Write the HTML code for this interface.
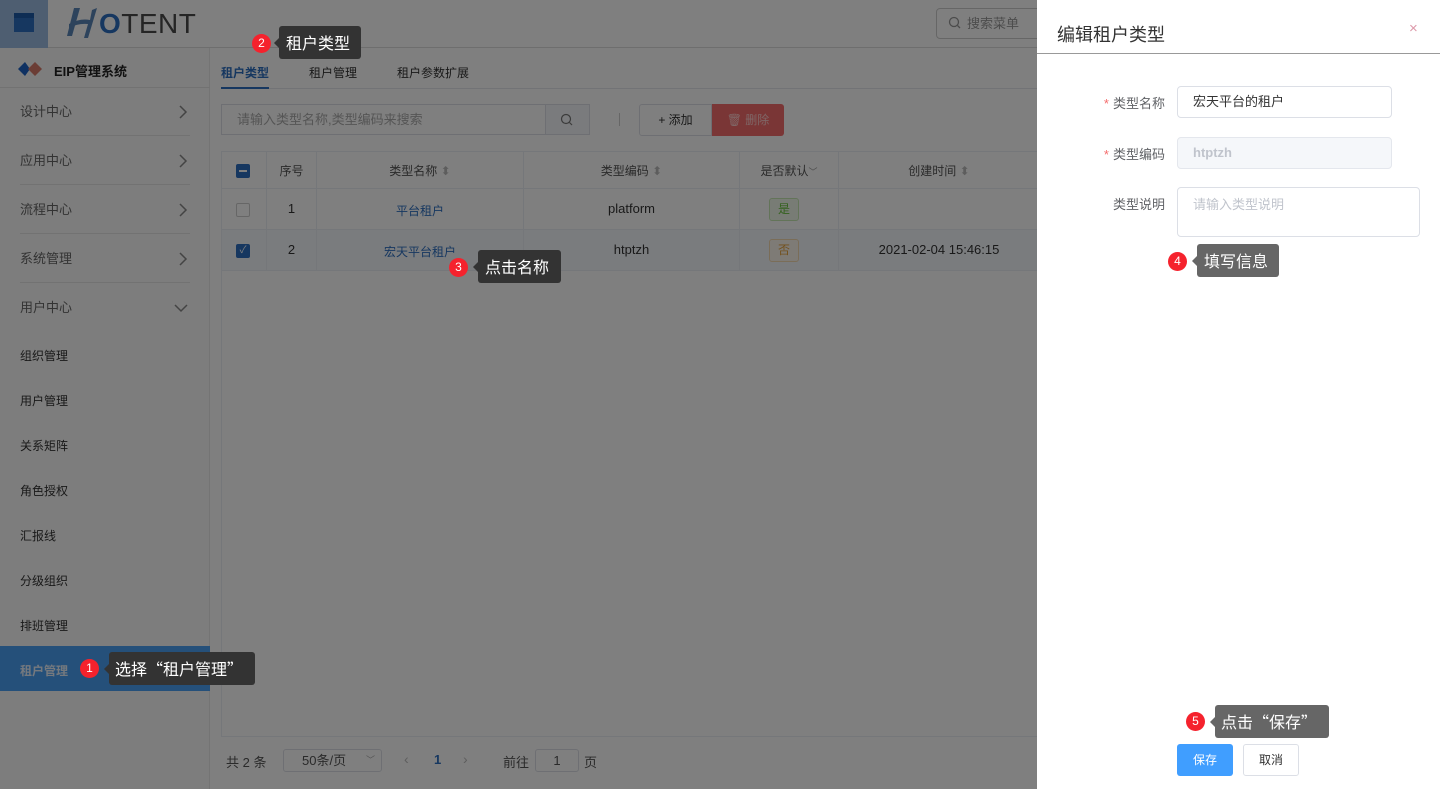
<!DOCTYPE html>
<html><head><meta charset="utf-8">
<style>
*{box-sizing:border-box;margin:0;padding:0}
body{width:1440px;height:789px;overflow:hidden;position:relative;font-family:"Liberation Sans","Noto Sans CJK SC",sans-serif;background:#fff;color:#333}
.abs{position:absolute}
.side{left:0;top:48px;width:210px;height:741px;background:#fbfbfb;border-right:1px solid #e8e8e8}
.mi{position:absolute;left:20px;width:170px;font-size:13px;color:#666;height:49px;line-height:49px;border-bottom:1px solid #e4e4e4}
.mi svg{position:absolute;right:2px;top:18px}
.si{position:absolute;left:20px;font-size:12px;color:#333}
.th,.td{position:absolute;font-size:12px;text-align:center}
.vl{position:absolute;width:1px;background:#ebeef5}
.hl{position:absolute;height:1px;background:#ebeef5}
.tip{position:absolute;background:#666;color:#fff;font-size:16px;font-family:"Noto Sans CJK SC",sans-serif;border-radius:3px;height:33px;line-height:33px;padding:0 6px;z-index:10;white-space:nowrap}
.tip:before{content:"";position:absolute;left:-5px;top:12px;border:5px solid transparent;border-left:0;border-right-color:#666}
.tip.d{background:#333}.tip.d:before{border-right-color:#333}
.bd{position:absolute;width:19px;height:19px;border-radius:50%;background:#f5222d;color:#fff;font-size:12px;text-align:center;line-height:19px;z-index:10}
.lbl{position:absolute;right:275px;font-size:13px;color:#606266}
.lbl b{color:#f56c6c;font-weight:normal;margin-right:4px}
.inp{position:absolute;left:1177px;border:1px solid #dcdfe6;border-radius:4px;font-size:13px;padding-left:15px}
</style></head><body>
<!-- header -->
<div class="abs" style="left:0;top:0;width:1440px;height:48px;background:#fff;border-bottom:1px solid #ddd"></div>
<div class="abs" style="left:0;top:0;width:48px;height:48px;background:#9dbde3"></div>
<div class="abs" style="left:14px;top:13px;width:20px;height:19px;background:#2d6fc1;border-top:5px solid #1d5aa8"></div>
<svg class="abs" style="left:66px;top:6px" width="40" height="32"><path d="M8 2L14 2L6 30L1 30Z" fill="#5b87b8"/><path d="M3 18Q14 12 24 14L26 4L31 2L22 32L18 32L22 18Q12 17 3 22Z" fill="#5b87b8"/></svg>
<div class="abs" style="left:99px;top:8px;font-size:28px;color:#4a4a4a;letter-spacing:0.5px"><span style="color:#2d6fc1;font-weight:bold">O</span>TENT</div>
<div class="abs" style="left:936px;top:8px;width:110px;height:31px;border:1px solid #ccc;border-radius:4px;font-size:13px;color:#999;line-height:29px;padding-left:30px">搜索菜单</div>
<svg class="abs" style="left:948px;top:16px" width="14" height="14"><circle cx="6" cy="6" r="4.5" fill="none" stroke="#999" stroke-width="1.3"/><path d="M9.5 9.5L12 12" stroke="#999" stroke-width="1.3"/></svg>
<!-- sidebar -->
<div class="abs side">
 <div style="position:absolute;left:0;top:0;width:210px;height:40px;border-bottom:1px solid #e4e4e4"></div>
 <svg style="position:absolute;left:18px;top:14px" width="24" height="14"><path d="M0 7L7 0L12 7L7 14Z" fill="#1e62c4"/><path d="M10 7L17 0L24 7L17 14Z" fill="#d77a6a"/></svg>
 <div style="position:absolute;left:54px;top:13px;font-size:13px;font-weight:bold;color:#222">EIP管理系统</div>
 <div class="mi" style="top:39px">设计中心<svg width="10" height="14"><path d="M2 1L8 7L2 13" fill="none" stroke="#888" stroke-width="1.5"/></svg></div>
 <div class="mi" style="top:88px">应用中心<svg width="10" height="14"><path d="M2 1L8 7L2 13" fill="none" stroke="#888" stroke-width="1.5"/></svg></div>
 <div class="mi" style="top:137px">流程中心<svg width="10" height="14"><path d="M2 1L8 7L2 13" fill="none" stroke="#888" stroke-width="1.5"/></svg></div>
 <div class="mi" style="top:186px">系统管理<svg width="10" height="14"><path d="M2 1L8 7L2 13" fill="none" stroke="#888" stroke-width="1.5"/></svg></div>
 <div class="mi" style="top:235px;border:0">用户中心<svg width="14" height="10" style="top:20px"><path d="M1 2L7 8L13 2" fill="none" stroke="#888" stroke-width="1.5"/></svg></div>
 <div class="si" style="top:299px">组织管理</div>
 <div class="si" style="top:344px">用户管理</div>
 <div class="si" style="top:389px">关系矩阵</div>
 <div class="si" style="top:434px">角色授权</div>
 <div class="si" style="top:479px">汇报线</div>
 <div class="si" style="top:524px">分级组织</div>
 <div class="si" style="top:569px">排班管理</div>
 <div style="position:absolute;left:0;top:598px;width:210px;height:45px;background:#4aa0f5"></div>
 <div class="si" style="top:614px;color:#eaf2fc;font-weight:bold">租户管理</div>
</div>
<!-- main -->
<div class="abs" style="left:211px;top:49px;width:829px;height:740px;background:#fff"></div>
<div class="abs" style="left:221px;top:64px;font-size:12px;color:#2d6fc1;font-weight:bold">租户类型</div>
<div class="abs" style="left:309px;top:64px;font-size:12px;color:#333">租户管理</div>
<div class="abs" style="left:397px;top:64px;font-size:12px;color:#333">租户参数扩展</div>
<div class="abs" style="left:221px;top:88px;width:820px;height:1px;background:#e4e7ed"></div>
<div class="abs" style="left:221px;top:87px;width:48px;height:2px;background:#2d6fc1"></div>
<div class="abs" style="left:221px;top:104px;width:369px;height:31px;border:1px solid #dcdfe6;font-size:13px;color:#aaa;line-height:29px;padding-left:15px">请输入类型名称,类型编码来搜索</div>
<div class="abs" style="left:545px;top:105px;width:44px;height:29px;background:#f5f7fa;border-left:1px solid #dcdfe6"></div>
<svg class="abs" style="left:560px;top:113px" width="14" height="14"><circle cx="6" cy="6" r="4.5" fill="none" stroke="#777" stroke-width="1.2"/><path d="M9.5 9.5L12 12" stroke="#777" stroke-width="1.2"/></svg>
<div class="abs" style="left:619px;top:113px;width:1px;height:13px;background:#ccc"></div>
<div class="abs" style="left:639px;top:104px;width:73px;height:32px;border:1px solid #dcdfe6;border-radius:3px 0 0 3px;font-size:12px;line-height:30px;text-align:center;color:#333">+ 添加</div>
<div class="abs" style="left:712px;top:104px;width:72px;height:32px;background:#f56c6c;border-radius:0 3px 3px 0;font-size:12px;line-height:32px;text-align:center;color:#fcc">🗑 删除</div>
<!-- table -->
<div class="abs" style="left:221px;top:151px;width:820px;height:586px;border:1px solid #ebeef5"></div>
<div class="abs" style="left:222px;top:229px;width:818px;height:41px;background:#f4f8fd"></div>
<div class="hl" style="left:222px;top:188px;width:818px"></div>
<div class="hl" style="left:222px;top:229px;width:818px"></div>
<div class="hl" style="left:222px;top:270px;width:818px"></div>
<div class="vl" style="left:266px;top:152px;height:118px"></div>
<div class="vl" style="left:316px;top:152px;height:118px"></div>
<div class="vl" style="left:523px;top:152px;height:118px"></div>
<div class="vl" style="left:739px;top:152px;height:118px"></div>
<div class="vl" style="left:838px;top:152px;height:118px"></div>
<div class="abs" style="left:236px;top:164px;width:14px;height:14px;background:#2d6fc1;border-radius:2px"><div style="margin:6px 3px;height:2px;background:#fff"></div></div>
<div class="abs" style="left:236px;top:203px;width:14px;height:14px;border:1px solid #ccc;border-radius:2px;background:#fff"></div>
<div class="abs" style="left:236px;top:244px;width:14px;height:14px;background:#2d6fc1;border-radius:2px;color:#fff;font-size:10px;text-align:center;line-height:14px">✓</div>
<div class="th" style="left:267px;width:49px;top:162px;color:#555">序号</div>
<div class="th" style="left:317px;width:206px;top:162px;color:#555">类型名称 <span style="color:#bbb">⬍</span></div>
<div class="th" style="left:524px;width:215px;top:162px;color:#555">类型编码 <span style="color:#bbb">⬍</span></div>
<div class="th" style="left:740px;width:98px;top:162px;color:#555">是否默认<span style="color:#999;font-size:9px">﹀</span></div>
<div class="th" style="left:839px;width:200px;top:162px;color:#555">创建时间 <span style="color:#bbb">⬍</span></div>
<div class="td" style="left:267px;width:49px;top:201px;font-size:13px">1</div>
<div class="td" style="left:317px;width:206px;top:202px;color:#2d6fc1">平台租户</div>
<div class="td" style="left:524px;width:215px;top:201px;font-size:13px">platform</div>
<div class="abs" style="left:769px;top:198px;width:30px;height:23px;background:#f0f9eb;border:1px solid #c6e8b3;border-radius:3px;color:#67c23a;font-size:12px;text-align:center;line-height:21px">是</div>
<div class="td" style="left:267px;width:49px;top:242px;font-size:13px">2</div>
<div class="td" style="left:317px;width:206px;top:243px;color:#2d6fc1">宏天平台租户</div>
<div class="td" style="left:524px;width:215px;top:242px;font-size:13px">htptzh</div>
<div class="abs" style="left:769px;top:239px;width:30px;height:23px;background:#fdf6ec;border:1px solid #f5dab1;border-radius:3px;color:#e6a23c;font-size:12px;text-align:center;line-height:21px">否</div>
<div class="td" style="left:839px;width:200px;top:242px;font-size:13px">2021-02-04 15:46:15</div>
<!-- pagination -->
<div class="abs" style="left:226px;top:752px;font-size:13px;color:#555">共 2 条</div>
<div class="abs" style="left:283px;top:749px;width:99px;height:23px;border:1px solid #dcdfe6;border-radius:3px;font-size:13px;line-height:21px;padding-left:18px;color:#555">50条/页 <span style="position:absolute;right:6px;color:#aaa;font-size:9px">﹀</span></div>
<div class="abs" style="left:404px;top:751px;font-size:14px;color:#bbb">‹</div>
<div class="abs" style="left:434px;top:752px;font-size:13px;color:#2d6fc1;font-weight:bold">1</div>
<div class="abs" style="left:463px;top:751px;font-size:14px;color:#bbb">›</div>
<div class="abs" style="left:503px;top:752px;font-size:13px;color:#555">前往</div>
<div class="abs" style="left:535px;top:749px;width:44px;height:23px;border:1px solid #dcdfe6;border-radius:3px;font-size:13px;line-height:21px;text-align:center;color:#555">1</div>
<div class="abs" style="left:584px;top:752px;font-size:13px;color:#555">页</div>
<!-- overlay -->
<div class="abs" style="left:0;top:0;width:1037px;height:789px;background:rgba(0,0,0,0.5)"></div>
<!-- drawer -->
<div class="abs" style="left:1037px;top:0;width:403px;height:789px;background:#fff"></div>
<div class="abs" style="left:1057px;top:21px;font-size:18px;color:#333">编辑租户类型</div>
<div class="abs" style="left:1409px;top:20px;font-size:15px;color:#d9a;">×</div>
<div class="abs" style="left:1037px;top:53px;width:403px;height:1px;background:#999"></div>
<div class="lbl" style="top:93px"><b>*</b>类型名称</div>
<div class="inp" style="top:86px;width:215px;height:32px;line-height:30px;color:#333">宏天平台的租户</div>
<div class="lbl" style="top:144px"><b>*</b>类型编码</div>
<div class="inp" style="top:137px;width:215px;height:32px;line-height:30px;background:#f5f7fa;border-color:#e4e7ed;color:#c0c4cc;font-size:13px;font-weight:bold">htptzh</div>
<div class="lbl" style="top:194px">类型说明</div>
<div class="inp" style="top:187px;width:243px;height:50px;padding-top:6px;color:#c0c4cc">请输入类型说明</div>
<div class="abs" style="left:1177px;top:744px;width:56px;height:32px;background:#409eff;border-radius:3px;color:#fff;font-size:12px;text-align:center;line-height:32px">保存</div>
<div class="abs" style="left:1243px;top:744px;width:56px;height:32px;border:1px solid #dcdfe6;border-radius:3px;color:#333;font-size:12px;text-align:center;line-height:30px">取消</div>
<!-- tips -->
<div class="bd" style="left:252px;top:34px">2</div><div class="tip d" style="left:279px;top:26px;width:82px;padding:0 7px">租户类型</div>
<div class="bd" style="left:449px;top:258px">3</div><div class="tip d" style="left:478px;top:250px;width:83px;padding:0 7px">点击名称</div>
<div class="bd" style="left:80px;top:659px">1</div><div class="tip d" style="left:109px;top:652px;width:146px;padding:0 6px">选择“租户管理”</div>
<div class="bd" style="left:1168px;top:252px">4</div><div class="tip" style="left:1197px;top:244px;width:82px;padding:0 7px">填写信息</div>
<div class="bd" style="left:1186px;top:712px">5</div><div class="tip" style="left:1215px;top:705px;width:114px;padding:0 6px">点击“保存”</div>
</body></html>
